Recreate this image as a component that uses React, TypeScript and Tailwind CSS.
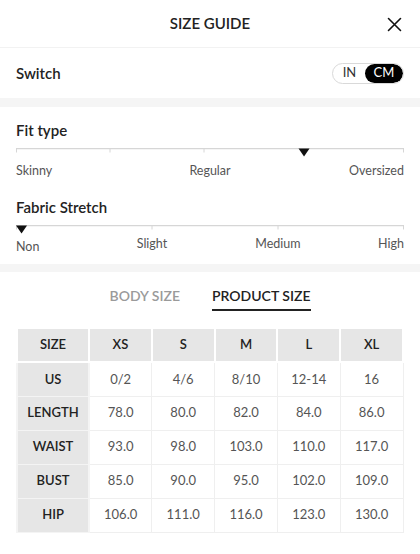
import React from "react";

const font = { fontFamily: "Lato, 'Open Sans', sans-serif" };

const cols = ["XS", "S", "M", "L", "XL"];
const rows: [string, string[]][] = [
  ["US", ["0/2", "4/6", "8/10", "12-14", "16"]],
  ["LENGTH", ["78.0", "80.0", "82.0", "84.0", "86.0"]],
  ["WAIST", ["93.0", "98.0", "103.0", "110.0", "117.0"]],
  ["BUST", ["85.0", "90.0", "95.0", "102.0", "109.0"]],
  ["HIP", ["106.0", "111.0", "116.0", "123.0", "130.0"]],
];

function Track({ ticks, marker }: { ticks: number[]; marker: number }) {
  return (
    <svg width="388" height="10" viewBox="0 0 388 10" className="block">
      <line x1="0" y1="0.6" x2="388" y2="0.6" stroke="#d6d6d6" strokeWidth="1.2" />
      {ticks.map((t) => (
        <line key={t} x1={t} y1="0.6" x2={t} y2="4.5" stroke="#d6d6d6" strokeWidth="1" />
      ))}
      <polygon points={`${marker - 5.5},0.5 ${marker + 5.5},0.5 ${marker},8.5`} fill="#111" />
    </svg>
  );
}

export default function App() {
  return (
    <div className="w-[420px] h-[554px] bg-white text-[#222] overflow-hidden" style={font}>
      {/* Header */}
      <div className="relative h-[48px] flex items-center justify-center border-b border-[#f2f2f2]">
        <span className="text-[15px] font-semibold text-[#222]">SIZE GUIDE</span>
        <button className="absolute right-[18px] top-[16px] w-[16px] h-[16px] flex items-center justify-center">
          <svg width="15" height="15" viewBox="0 0 15 15">
            <path d="M1.5 1.5 L13.5 13.5 M13.5 1.5 L1.5 13.5" stroke="#111" strokeWidth="1.6" strokeLinecap="round" />
          </svg>
        </button>
      </div>

      {/* Switch */}
      <div className="h-[50px] px-4 flex items-center justify-between">
        <span className="text-[15px] font-semibold text-[#222]">Switch</span>
        <div className="flex h-[21px] w-[72px] rounded-full border border-[#d9d9d9] overflow-hidden text-[13px]">
          <div className="w-[33px] flex items-center justify-center text-[#333]">IN</div>
          <div className="flex-1 flex items-center justify-center bg-black text-white rounded-full -ml-[1px]">CM</div>
        </div>
      </div>
      <div className="h-[9px] bg-[#f5f5f5]" />

      {/* Fit type */}
      <div className="px-4 pt-[13px]">
        <div className="text-[15px] font-semibold leading-[20px] text-[#222]">Fit type</div>
        <div className="mt-[8px]">
          <Track ticks={[0.5, 94, 188, 387.5]} marker={288} />
        </div>
        <div className="grid grid-cols-3 text-[12.5px] leading-[18px] text-[#555] mt-[4px]">
          <span className="text-left">Skinny</span>
          <span className="text-center">Regular</span>
          <span className="text-right">Oversized</span>
        </div>

        <div className="text-[15px] font-semibold leading-[20px] text-[#222] mt-[17px]">Fabric Stretch</div>
        <div className="mt-[8px]">
          <Track ticks={[0.5, 136, 262, 387.5]} marker={5.5} />
        </div>
        <div className="grid grid-cols-[68px_136px_116px_1fr] text-[12.5px] leading-[18px] text-[#555]">
          <span className="text-left pt-[3px]">Non</span>
          <span className="text-center">Slight</span>
          <span className="text-center">Medium</span>
          <span className="text-right">High</span>
        </div>
      </div>
      <div className="h-[8px] bg-[#f5f5f5] mt-[8px]" />

      {/* Tabs */}
      <div className="flex justify-center gap-[32px] pt-[15px] text-[14px] leading-[18px] font-semibold">
        <div className="text-[#9a9a9a] pb-[4px] border-b-2 border-transparent">BODY SIZE</div>
        <div className="text-[#222] pb-[4px] border-b-2 border-[#222]">PRODUCT SIZE</div>
      </div>

      {/* Table */}
      <div className="px-4 mt-[16px]">
        <table className="w-[388px] border-collapse table-fixed text-[13px]">
          <colgroup>
            <col className="w-[72px]" />
            <col />
            <col />
            <col />
            <col />
            <col />
          </colgroup>
          <thead>
            <tr className="h-[34px]">
              <th className="bg-[#e6e6e6] border-2 border-white font-semibold text-[#222]">SIZE</th>
              {cols.map((c) => (
                <th key={c} className="bg-[#e6e6e6] border-2 border-white font-semibold text-[#222]">
                  {c}
                </th>
              ))}
            </tr>
          </thead>
          <tbody>
            {rows.map(([label, vals]) => (
              <tr key={label} className="h-[34px]">
                <td className="bg-[#e6e6e6] border-x-2 border-y border-[#f4f4f4] text-center font-semibold text-[#222]">{label}</td>
                {vals.map((v, i) => (
                  <td key={i} className="border border-[#efefef] text-center text-[#555]">
                    {v}
                  </td>
                ))}
              </tr>
            ))}
          </tbody>
        </table>
      </div>
    </div>
  );
}
